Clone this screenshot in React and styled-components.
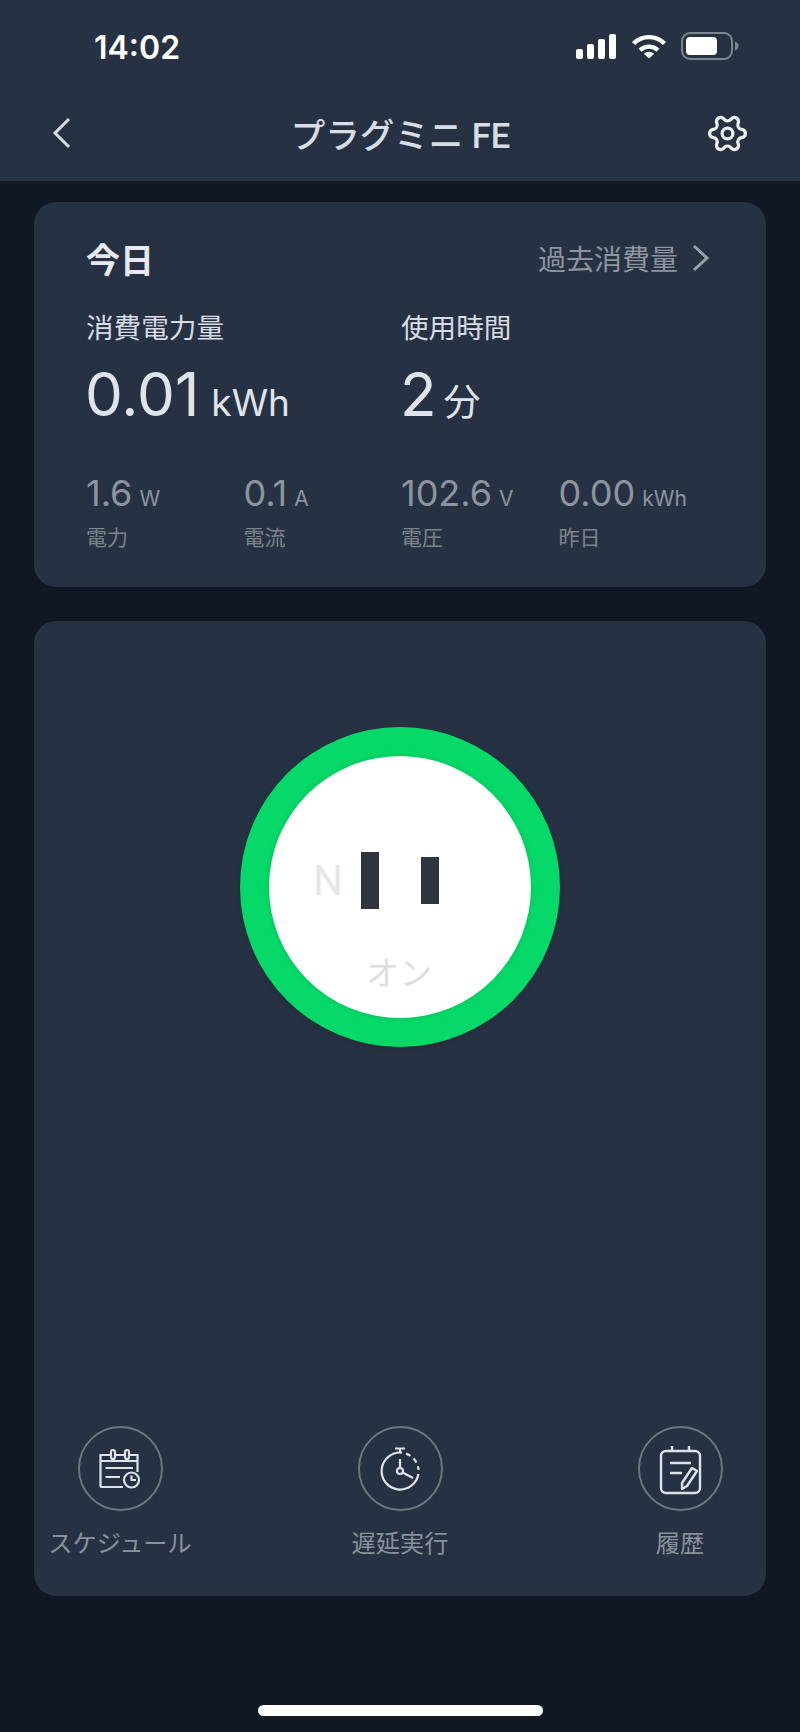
import React from "react";
import styled, { createGlobalStyle } from "styled-components";
import { Settings } from "lucide-react";

const GlobalStyle = createGlobalStyle`
  html, body {
    margin: 0;
    padding: 0;
    background: #101823;
  }
  * {
    box-sizing: border-box;
  }
  body {
    font-family: "Roboto", "Noto Sans CJK JP", sans-serif;
  }
`;

const stats = [
  { value: "1.6", unit: "W", label: "電力" },
  { value: "0.1", unit: "A", label: "電流" },
  { value: "102.6", unit: "V", label: "電圧" },
  { value: "0.00", unit: "kWh", label: "昨日" },
];

const SignalIcon = () => (
  <svg width="41" height="25" viewBox="0 0 41 25" fill="#fff">
    <rect x="0" y="15" width="7" height="10" rx="2" />
    <rect x="11" y="10" width="7" height="15" rx="2" />
    <rect x="22" y="5" width="7" height="20" rx="2" />
    <rect x="33" y="0" width="7" height="25" rx="2" />
  </svg>
);

const WifiIcon = () => (
  <svg width="36" height="26" viewBox="0 0 36 26" fill="none" stroke="#fff" strokeWidth="4.4">
    <path d="M2.5 10.5A22 22 0 0 1 33.5 10.5" />
    <path d="M9 17.2A13 13 0 0 1 27 17.2" />
    <path d="M18 25.5L12.8 20.8A7.6 7.6 0 0 1 23.2 20.8Z" fill="#fff" stroke="none" />
  </svg>
);

const BatteryIcon = () => (
  <svg width="58" height="28" viewBox="0 0 58 28">
    <rect x="1" y="1" width="50" height="26" rx="8" fill="none" stroke="#7d8590" strokeWidth="2" />
    <rect x="5" y="5" width="31" height="18" rx="4" fill="#fff" />
    <path d="M54 9.5C56.5 10.5 57.5 12 57.5 14C57.5 16 56.5 17.5 54 18.5Z" fill="#7d8590" />
  </svg>
);

const BackIcon = () => (
  <svg width="20" height="32" viewBox="0 0 20 32" fill="none" stroke="#d8dce3" strokeWidth="3">
    <path d="M17 2L3 16L17 30" />
  </svg>
);

const CalendarIcon = () => (
  <svg width="48" height="48" viewBox="0 0 48 48" fill="none" stroke="#dfe3e8" strokeWidth="2.2">
    <path d="M27 42H6A1.5 1.5 0 0 1 4.5 40.5V10H41.5V27" />
    <path d="M4.5 16H41.5" />
    <rect x="15" y="5" width="4" height="9" rx="2" fill="#263243" />
    <rect x="29" y="5" width="4" height="9" rx="2" fill="#263243" />
    <path d="M9.5 23H37M9.5 32H24" />
    <circle cx="35.5" cy="35" r="7.5" />
    <path d="M35.5 30.5V35H40" />
  </svg>
);

const TimerIcon = () => (
  <svg width="48" height="48" viewBox="0 0 48 48" fill="none" stroke="#dfe3e8" strokeWidth="2.2">
    <path d="M19 3.5H29M24 3.5V7.5" />
    <path d="M42.4 29A18.5 18.5 0 1 1 26 7.6" />
    <path d="M30 8.6A18.5 18.5 0 0 1 42.5 25" strokeDasharray="5 4" />
    <path d="M24 14V23M26.6 27.5L37 33" />
    <circle cx="24" cy="26" r="3" />
  </svg>
);

const NoteIcon = () => (
  <svg width="52" height="52" viewBox="0 0 52 52" fill="none" stroke="#dfe3e8" strokeWidth="2.4">
    <rect x="7" y="8" width="39" height="42" rx="5" />
    <path d="M18 3V8M35 3V8M16 20H37M16 30H28" />
    <path d="M38 25L43 28L33 43L28 46L28 40Z" strokeLinejoin="round" />
  </svg>
);

const App = () => {
  return (
    <>
      <GlobalStyle />
      <Page lang="ja">
        <Header>
          <StatusBar>
            <Clock>14:02</Clock>
            <StatusIcons>
              <SignalIcon />
              <WifiIcon />
              <BatteryIcon />
            </StatusIcons>
          </StatusBar>
          <NavBar>
            <BackIcon />
            <Title>プラグミニ FE</Title>
            <GearIcon size={43} strokeWidth={1.8} color="#eef0f3" />
          </NavBar>
        </Header>

        <UsageCard>
          <UsageHead>
            <Today>今日</Today>
            <HistoryLink>
              過去消費量
              <svg width="18" height="28" viewBox="0 0 18 28" fill="none" stroke="#9aa0a9" strokeWidth="3">
                <path d="M2 2L15 14L2 26" />
              </svg>
            </HistoryLink>
          </UsageHead>
          <MainStats>
            <div>
              <MainLabel>消費電力量</MainLabel>
              <MainValue>
                0.01<MainUnit>kWh</MainUnit>
              </MainValue>
            </div>
            <div>
              <MainLabel>使用時間</MainLabel>
              <MainValue>
                2<MainUnit $tight>分</MainUnit>
              </MainValue>
            </div>
          </MainStats>
          <SmallStats>
            {stats.map((s) => (
              <div key={s.label}>
                <SmallValue>
                  {s.value}
                  <SmallUnit>{s.unit}</SmallUnit>
                </SmallValue>
                <SmallLabel>{s.label}</SmallLabel>
              </div>
            ))}
          </SmallStats>
        </UsageCard>

        <PlugCard>
          <PowerRing>
            <PowerFace>
              <Socket>
                <SocketLetter>N</SocketLetter>
                <Slot $tall />
                <Slot />
              </Socket>
              <PowerState>オン</PowerState>
            </PowerFace>
          </PowerRing>
          <Actions>
            <Action>
              <ActionCircle>
                <CalendarIcon />
              </ActionCircle>
              <ActionLabel>スケジュール</ActionLabel>
            </Action>
            <Action>
              <ActionCircle>
                <TimerIcon />
              </ActionCircle>
              <ActionLabel>遅延実行</ActionLabel>
            </Action>
            <Action>
              <ActionCircle>
                <NoteIcon />
              </ActionCircle>
              <ActionLabel>履歴</ActionLabel>
            </Action>
          </Actions>
        </PlugCard>

        <HomeBar />
      </Page>
    </>
  );
};

const Page = styled.div`
  width: 800px;
  height: 1732px;
  background: #101823;
  display: flex;
  flex-direction: column;
  overflow: hidden;
`;

const Header = styled.header`
  height: 181px;
  background: #263243;
  flex: none;
`;

const StatusBar = styled.div`
  height: 94px;
  padding: 0 61px 0 94px;
  display: flex;
  align-items: center;
  justify-content: space-between;
`;

const Clock = styled.div`
  font-family: "Inter", sans-serif;
  font-size: 32px;
  font-weight: 600;
  color: #fff;
`;

const StatusIcons = styled.div`
  display: flex;
  align-items: center;
  gap: 14px;
  margin-top: -2px;
`;

const NavBar = styled.div`
  height: 78px;
  padding: 0 51px 0 52px;
  display: grid;
  grid-template-columns: 1fr auto 1fr;
  align-items: center;
`;

const Title = styled.h1`
  margin: 0;
  font-size: 34.5px;
  font-weight: 500;
  color: #d8dce3;
`;

const GearIcon = styled(Settings)`
  transform: rotate(90deg);
  justify-self: end;
`;

const UsageCard = styled.section`
  margin: 21px 34px 0;
  height: 385px;
  padding: 36px 56px 0 52px;
  background: #263243;
  border-radius: 22px;
`;

const UsageHead = styled.div`
  height: 40px;
  display: flex;
  align-items: center;
  justify-content: space-between;
`;

const Today = styled.h2`
  margin: 0;
  font-size: 34px;
  font-weight: 700;
  color: #e6e9ef;
`;

const HistoryLink = styled.div`
  display: flex;
  align-items: center;
  gap: 14px;
  font-size: 28px;
  color: #8e949e;
`;

const MainStats = styled.div`
  margin-top: 33px;
  display: grid;
  grid-template-columns: 315px 1fr;
`;

const MainLabel = styled.div`
  font-size: 27.6px;
  line-height: 36px;
  color: #d8dce3;
`;

const MainValue = styled.div`
  margin-top: 17px;
  margin-left: -1px;
  font-family: "Inter", "Noto Sans CJK JP", sans-serif;
  font-size: 60px;
  line-height: 60px;
  font-weight: 400;
  color: #e0e3ea;
`;

const MainUnit = styled.span`
  margin-left: ${(p) => (p.$tight ? "7px" : "12px")};
  font-size: 37px;
`;

const SmallStats = styled.div`
  margin-top: 40px;
  display: grid;
  grid-template-columns: repeat(4, 157.5px);
`;

const SmallValue = styled.div`
  font-family: "Inter", sans-serif;
  font-size: 36px;
  line-height: 40px;
  font-weight: 400;
  color: #8e949e;
`;

const SmallUnit = styled.span`
  margin-left: 7px;
  font-size: 21px;
`;

const SmallLabel = styled.div`
  margin-top: 5px;
  font-size: 21px;
  line-height: 28px;
  color: #7d838d;
`;

const PlugCard = styled.section`
  margin: 34px 34px 0;
  height: 975px;
  padding-top: 106px;
  background: #263243;
  border-radius: 22px;
  display: flex;
  flex-direction: column;
  align-items: center;
`;

const PowerRing = styled.div`
  width: 320px;
  height: 320px;
  border-radius: 50%;
  background: #06d968;
  display: flex;
  align-items: center;
  justify-content: center;
  box-shadow: 0 2px 4px rgba(0, 0, 0, 0.15);
`;

const PowerFace = styled.div`
  width: 262px;
  height: 262px;
  border-radius: 50%;
  background: #fff;
  padding: 96px 0 0 44px;
  box-shadow: 0 0 6px rgba(0, 0, 0, 0.12);
`;

const Socket = styled.div`
  display: flex;
  align-items: center;
  height: 57px;
`;

const SocketLetter = styled.span`
  width: 48px;
  font-size: 42px;
  color: #e4e6e8;
`;

const Slot = styled.span`
  width: 18px;
  height: ${(p) => (p.$tall ? "57px" : "47px")};
  margin-right: 42px;
  background: #31343f;
`;

const PowerState = styled.div`
  margin: 47px 0 0 53px;
  font-size: 33px;
  line-height: 36px;
  color: #dcdee0;
`;

const Actions = styled.div`
  margin-top: auto;
  padding-bottom: 35px;
  width: 100%;
  display: grid;
  grid-template-columns: repeat(3, 172px);
  justify-content: space-between;
`;

const Action = styled.div`
  display: flex;
  flex-direction: column;
  align-items: center;
`;

const ActionCircle = styled.div`
  width: 85px;
  height: 85px;
  border: 2px solid #70767f;
  border-radius: 50%;
  display: flex;
  align-items: center;
  justify-content: center;
`;

const ActionLabel = styled.div`
  margin-top: 16px;
  font-size: 24.2px;
  line-height: 34px;
  color: #8b919b;
`;

const HomeBar = styled.div`
  margin: 109px auto 0;
  width: 285px;
  height: 11px;
  border-radius: 6px;
  background: #fff;
`;

export default App;
